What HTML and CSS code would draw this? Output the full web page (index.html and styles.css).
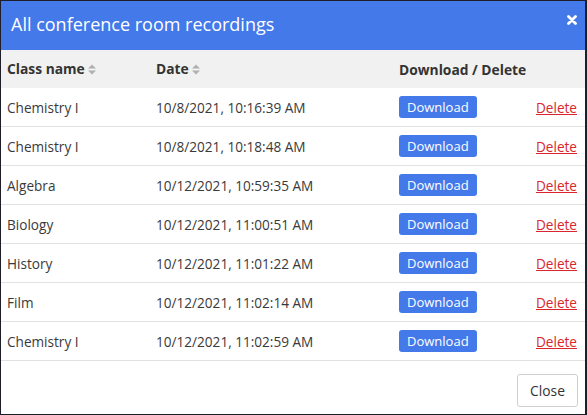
FILE: index.html
```html
<!DOCTYPE html>
<html>
<head>
<meta charset="utf-8">
<link rel="stylesheet" href="styles.css">
</head>
<body>
<div class="modal">
  <div class="modal-header">
    <h1 class="title">All conference room recordings</h1>
    <span class="close-x"><svg width="10" height="10" viewBox="0 0 10 10"><path d="M1.5 1.5L8.5 8.5M8.5 1.5L1.5 8.5" stroke="#fff" stroke-width="2.8" stroke-linecap="round"/></svg></span>
  </div>
  <table class="rec">
    <thead>
      <tr>
        <th class="c-name">Class name <span class="sort"><svg width="8" height="11" viewBox="0 0 8 11"><path d="M0 4.5L4 0.5L8 4.5Z M0 6.5L4 10.5L8 6.5Z" fill="#b0b0b0"/></svg></span></th>
        <th class="c-date">Date <span class="sort"><svg width="8" height="11" viewBox="0 0 8 11"><path d="M0 4.5L4 0.5L8 4.5Z M0 6.5L4 10.5L8 6.5Z" fill="#b0b0b0"/></svg></span></th>
        <th class="c-act" colspan="2">Download / Delete</th>
      </tr>
    </thead>
    <tbody>
      <tr><td>Chemistry I</td><td>10/8/2021, 10:16:39 AM</td><td><span class="btn-dl">Download</span></td><td class="c-del"><a class="del">Delete</a></td></tr>
      <tr><td>Chemistry I</td><td>10/8/2021, 10:18:48 AM</td><td><span class="btn-dl">Download</span></td><td class="c-del"><a class="del">Delete</a></td></tr>
      <tr><td>Algebra</td><td>10/12/2021, 10:59:35 AM</td><td><span class="btn-dl">Download</span></td><td class="c-del"><a class="del">Delete</a></td></tr>
      <tr><td>Biology</td><td>10/12/2021, 11:00:51 AM</td><td><span class="btn-dl">Download</span></td><td class="c-del"><a class="del">Delete</a></td></tr>
      <tr><td>History</td><td>10/12/2021, 11:01:22 AM</td><td><span class="btn-dl">Download</span></td><td class="c-del"><a class="del">Delete</a></td></tr>
      <tr><td>Film</td><td>10/12/2021, 11:02:14 AM</td><td><span class="btn-dl">Download</span></td><td class="c-del"><a class="del">Delete</a></td></tr>
      <tr><td>Chemistry I</td><td>10/12/2021, 11:02:59 AM</td><td><span class="btn-dl">Download</span></td><td class="c-del"><a class="del">Delete</a></td></tr>
    </tbody>
  </table>
  <div class="modal-footer">
    <button class="btn-close">Close</button>
  </div>
</div>
</body>
</html>
```
FILE: styles.css
```css
html, body {
  margin: 0;
  padding: 0;
  background: #fff;
}
.modal {
  width: 587px;
  height: 415px;
  box-sizing: border-box;
  border: 1px solid #1e1e2a;
  border-right-width: 2px;
  font-family: "Open Sans", "Liberation Sans", sans-serif;
  color: #3a3a3a;
  display: flex;
  flex-direction: column;
  background: #fff;
}
.modal-header {
  height: 49px;
  background: #4479ea;
  display: flex;
  align-items: flex-start;
  justify-content: space-between;
  padding: 0 8px 0 10px;
  flex-shrink: 0;
}
.title {
  margin: 0;
  font-size: 18px;
  line-height: 24px;
  padding-top: 11px;
  font-weight: 400;
  color: #fff;
}
.close-x {
  display: block;
  padding-top: 14px;
  line-height: 0;
}
.rec {
  width: 100%;
  border-collapse: collapse;
  font-size: 13.6px;
}
.rec th {
  background: #f1f1f1;
  text-align: left;
  font-weight: 700;
  font-size: 13.8px;
  height: 38px;
  padding: 0 6px;
  color: #333;
  white-space: nowrap;
}
.rec td {
  height: 38px;
  padding: 0 6px;
  border-bottom: 1px solid #e2e2e2;
  white-space: nowrap;
}
.c-name { width: 137px; }
.c-date { width: 231px; }
.sort {
  display: inline-block;
  vertical-align: -1px;
}
.c-del {
  text-align: right;
  padding-right: 8px !important;
}
.btn-dl {
  display: inline-block;
  background: #4479ea;
  color: #fff;
  border-radius: 3px;
  padding: 2px 8px 2px;
  font-size: 13px;
  line-height: 18px;
}
.del {
  color: #d9262c;
  text-decoration: underline;
}
.modal-footer {
  flex: 1;
  display: flex;
  align-items: center;
  justify-content: flex-end;
  padding: 0 7px 0 0;
}
.btn-close {
  font-family: "Open Sans", "Liberation Sans", sans-serif;
  font-size: 13.8px;
  color: #333;
  background: #fff;
  border: 1px solid #cfcfcf;
  border-radius: 3px;
  width: 61px;
  height: 33px;
  margin-top: 6px;
}
```
